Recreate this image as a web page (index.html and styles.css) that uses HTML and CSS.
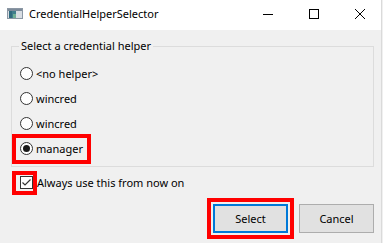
FILE: index.html
```html
<!DOCTYPE html>
<html>
<head>
<meta charset="utf-8">
<link rel="stylesheet" href="styles.css">
</head>
<body>
<div class="window">
  <div class="titlebar">
    <svg class="app-icon" width="16" height="11" viewBox="0 0 16 11">
      <rect x="0.5" y="0.5" width="15" height="10" fill="#d8dde3" stroke="#8b97a4"/>
      <rect x="1" y="1" width="14" height="2" fill="#7d8b9a"/>
      <rect x="2" y="3" width="7" height="7" fill="#3f7d8c"/>
      <rect x="2" y="3" width="3" height="7" fill="#2f6a7e"/>
      <rect x="6" y="6" width="3" height="4" fill="#6fae95"/>
    </svg>
    <span class="title">CredentialHelperSelector</span>
    <div class="caption">
      <span class="cbtn"><svg width="10" height="10" viewBox="0 0 10 10"><line x1="0" y1="5.5" x2="10" y2="5.5" stroke="#000" stroke-width="1"/></svg></span>
      <span class="cbtn"><svg width="10" height="10" viewBox="0 0 10 10"><rect x="0.5" y="0.5" width="9" height="9" fill="none" stroke="#000" stroke-width="1"/></svg></span>
      <span class="cbtn"><svg width="10" height="10" viewBox="0 0 10 10"><path d="M0 0 L10 10 M10 0 L0 10" stroke="#000" stroke-width="1"/></svg></span>
    </div>
  </div>
  <div class="client">
    <fieldset class="group">
      <legend class="group-title">Select a credential helper</legend>
      <div class="row"><label class="opt"><span class="radio"></span><span class="opt-text">&lt;no helper&gt;</span></label></div>
      <div class="row"><label class="opt"><span class="radio"></span><span class="opt-text">wincred</span></label></div>
      <div class="row"><label class="opt"><span class="radio"></span><span class="opt-text">wincred</span></label></div>
      <div class="row"><label class="opt marked"><span class="radio checked"></span><span class="opt-text">manager</span></label></div>
    </fieldset>
    <div class="check-row">
      <span class="check-wrap marked"><span class="checkbox"><svg width="11" height="11" viewBox="0 0 11 11"><polyline points="1.5,5.5 4,8 9.5,2.5" fill="none" stroke="#333" stroke-width="1.2"/></svg></span></span>
      <span class="check-text">Always use this from now on</span>
    </div>
    <div class="buttons">
      <button class="btn default marked-btn">Select</button>
      <button class="btn">Cancel</button>
    </div>
  </div>
</div>
</body>
</html>
```

FILE: styles.css
```css
html, body {
  margin: 0;
  padding: 0;
  background: #f0f0f0;
}
body {
  width: 383px;
  height: 243px;
  overflow: hidden;
  font-family: "Noto Sans", "Open Sans", sans-serif;
  font-size: 11px;
  color: #000;
}
.window {
  width: 382px;
  height: 243px;
  border-right: 1px solid #dadada;
  box-sizing: border-box;
  background: #f0f0f0;
}
.titlebar {
  height: 30px;
  background: #fff;
  display: flex;
  align-items: center;
  overflow: hidden;
}
.app-icon {
  margin-left: 7px;
  margin-top: -4px;
  flex: none;
}
.title {
  margin-left: 6px;
  font-size: 11px;
  line-height: 16px;
  margin-top: -2px;
}
.caption {
  margin-left: auto;
  display: flex;
  margin-right: -2px;
  height: 30px;
}
.cbtn {
  width: 46px;
  height: 30px;
  display: flex;
  align-items: center;
  justify-content: center;
}
.cbtn svg {
  margin-top: -2px;
}
.client {
  padding-top: 8px;
}
.group {
  margin: 0 0 0 11px;
  width: 363px;
  box-sizing: border-box;
  border: 1px solid #dcdcdc;
  padding: 7px 0 5px 4px;
  min-width: 0;
}
.group-title {
  margin-left: 3px;
  padding: 0 2px;
  line-height: 16px;
  font-size: 11px;
}
.row {
  height: 25px;
  display: flex;
  align-items: center;
}
.opt {
  display: inline-flex;
  align-items: center;
  height: 22px;
  padding: 0 4px;
}
.radio {
  width: 13px;
  height: 13px;
  box-sizing: border-box;
  border: 1px solid #333;
  border-radius: 50%;
  background: #fff;
  display: flex;
  align-items: center;
  justify-content: center;
  flex: none;
}
.radio.checked::after {
  content: "";
  width: 7px;
  height: 7px;
  border-radius: 50%;
  background: #1a1a1a;
}
.opt-text {
  margin-left: 3px;
  line-height: 16px;
}
.marked {
  outline: 4px solid #ff0000;
}
.check-row {
  margin-top: 3px;
  margin-left: 16px;
  height: 25px;
  display: flex;
  align-items: center;
}
.check-wrap {
  display: inline-flex;
  padding: 1px 0 2px 4px;
}
.checkbox {
  width: 13px;
  height: 13px;
  box-sizing: border-box;
  border: 1px solid #333;
  background: #fff;
  display: flex;
  align-items: center;
  justify-content: center;
}
.check-text {
  margin-left: 4px;
  line-height: 16px;
}
.buttons {
  margin-top: 9px;
  display: flex;
  justify-content: flex-end;
  gap: 11px;
  padding-right: 7px;
}
.btn {
  width: 75px;
  height: 29px;
  box-sizing: border-box;
  border: 1px solid #adadad;
  background: #e1e1e1;
  font-family: "Noto Sans", "Open Sans", sans-serif;
  font-size: 11px;
  color: #000;
  padding: 0;
  margin: 0;
}
.btn.default {
  border: 2px solid #0078d7;
}
.marked-btn {
  outline: 4px solid #ff0000;
  outline-offset: 2px;
}
```
